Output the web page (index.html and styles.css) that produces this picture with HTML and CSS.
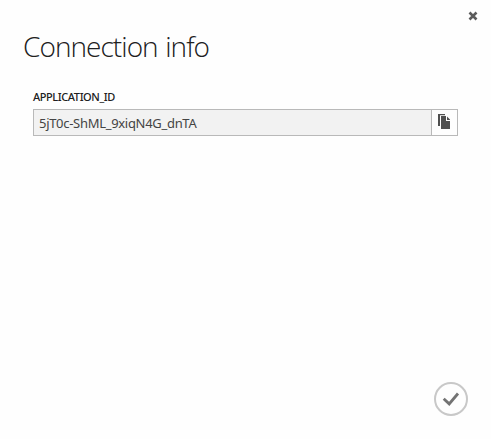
FILE: index.html
```html
<!DOCTYPE html>
<html lang="en">
<head>
<meta charset="utf-8">
<title>Connection info</title>
<link rel="stylesheet" href="styles.css">
</head>
<body>
<main class="dialog">
  <header class="dialog-header">
    <button class="icon-button close" aria-label="Close">
      <svg width="10" height="10" viewBox="0 0 10 10"><path d="M1.5 1.5 8.5 8.5M8.5 1.5 1.5 8.5"/></svg>
    </button>
    <h1 class="title"><span>Connection info</span></h1>
  </header>
  <section class="content">
    <label class="label" for="app-id">APPLICATION_ID</label>
    <div class="field">
      <output class="value" id="app-id">5jT0c-ShML_9xiqN4G_dnTA</output>
      <button class="icon-button copy" aria-label="Copy">
        <svg width="13" height="15" viewBox="0 0 13 15"><path d="M0 0H7V1.3H2V12H0ZM3 2H8V7H12V15H3ZM9 2.5 12 5.5V6H9Z"/></svg>
      </button>
    </div>
  </section>
  <footer class="actions">
    <button class="icon-button confirm" aria-label="OK">
      <svg width="34" height="34" viewBox="0 0 34 34"><circle cx="17" cy="17" r="16"/><path d="M9.7 16.8 15.2 21.9 24 11.5"/></svg>
    </button>
  </footer>
</main>
</body>
</html>
```
FILE: styles.css
```css
* { box-sizing: border-box; }
body {
  margin: 0;
  background: #fefefe;
  font-family: "Noto Sans", "Open Sans", sans-serif;
}
.dialog {
  display: flex;
  flex-direction: column;
  height: 439px;
  padding: 11px 13px 23px 23px;
}
.dialog-header { display: flex; flex-direction: column; }
.icon-button {
  display: flex;
  padding: 0;
  border: 0;
  background: transparent;
}
.icon-button svg { display: block; }
.close { align-self: flex-end; }
.close path { fill: none; stroke: #5b5b5b; stroke-width: 2.6; }
.title {
  margin: 5px 0 0;
  font-family: "Open Sans", "Noto Sans", sans-serif;
  font-size: 28px;
  font-weight: 300;
  line-height: 40px;
  letter-spacing: -0.95px;
  word-spacing: 1.2px;
  color: #202020;
}
.content { padding: 23px 10px 0; }
.label {
  display: block;
  height: 20px;
  font-size: 11px;
  line-height: 16px;
  letter-spacing: -0.42px;
  font-weight: 500;
  color: #202020;
}
.field {
  display: flex;
  width: 425px;
  height: 27px;
  border: 1px solid #b9b9b9;
}
.value {
  flex: 1;
  padding-left: 5px;
  background: #f2f2f2;
  font-size: 13px;
  line-height: 27px;
  letter-spacing: -0.3px;
  color: #444;
}
.copy {
  width: 26px;
  border-left: 1px solid #b9b9b9;
  padding: 4px 0 0 6px;
  background: #fefefe;
}
.copy path { fill: #505050; }
.actions {
  display: flex;
  justify-content: flex-end;
  margin-top: auto;
  padding-right: 10px;
}
.confirm circle { fill: none; stroke: #c8c8c8; stroke-width: 2; }
.confirm path { fill: none; stroke: #737373; stroke-width: 2.8; }
```
